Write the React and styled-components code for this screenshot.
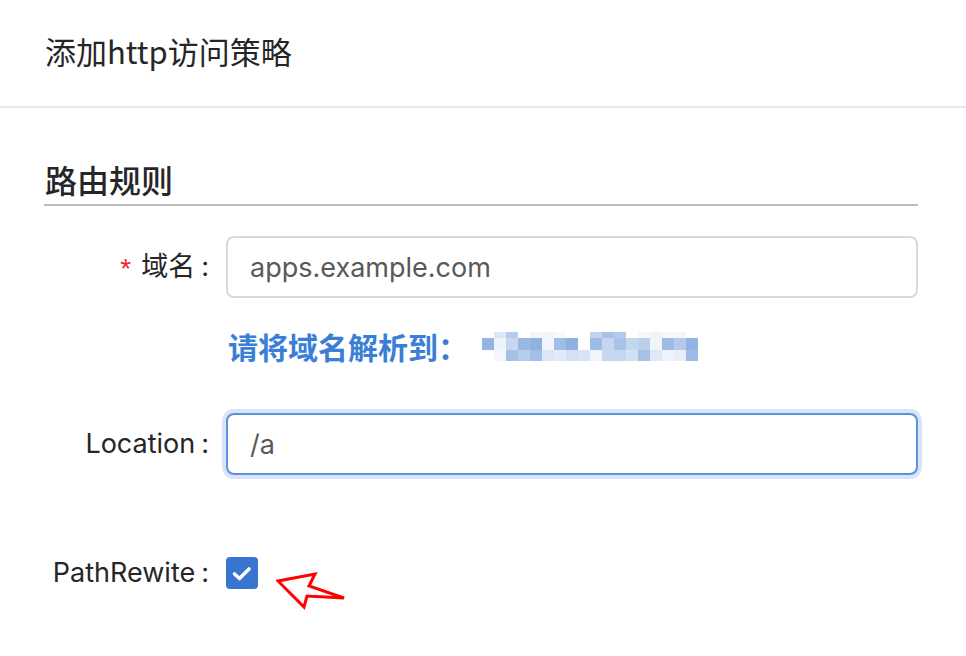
import React from "react";
import styled, { createGlobalStyle } from "styled-components";

const GlobalStyle = createGlobalStyle`
  html, body {
    margin: 0;
    padding: 0;
    background: #ffffff;
  }
  body {
    font-family: Inter, "Noto Sans CJK SC", sans-serif;
    color: #262626;
  }
`;

const Page = styled.div`
  width: 966px;
  height: 656px;
  overflow: hidden;
  background: #fff;
`;

const Header = styled.header`
  box-sizing: border-box;
  height: 108px;
  display: flex;
  align-items: center;
  padding: 0 45px 6px;
  border-bottom: 2px solid #e8e8e8;
  font-size: 31px;
  font-weight: 400;
  font-family: "Noto Sans CJK SC", sans-serif;
  color: #262626;
`;

const Body = styled.div`
  padding: 51px 48px 0 44px;
`;

const SectionTitle = styled.h2`
  margin: 0;
  font-size: 32px;
  font-weight: 500;
  line-height: 40px;
  padding: 0 0 5px 1px;
  border-bottom: 2px solid #bdbdbd;
  font-family: "Noto Sans CJK SC", sans-serif;
  color: #262626;
`;

const Row = styled.div`
  display: grid;
  grid-template-columns: 182px 1fr;
  align-items: center;
  margin-top: ${(p) => p.$top}px;
`;

const Label = styled.label`
  display: flex;
  justify-content: flex-end;
  align-items: center;
  font-size: 27px;
  line-height: 40px;
  color: #262626;
  white-space: nowrap;
  font-family: Inter, "Noto Sans CJK SC", sans-serif;

  &::after {
    content: ":";
    margin: 0 17px 0 6px;
  }
`;

const Required = styled.span`
  color: #f5222d;
  margin-right: 10px;
  font-size: 28px;
  font-family: "Liberation Sans", sans-serif;
  position: relative;
  top: 2px;
`;

const Input = styled.input`
  box-sizing: border-box;
  width: 100%;
  height: 62px;
  padding: 0 22px;
  border: 2px solid ${(p) => (p.$focused ? "#5b93e0" : "#d9d9d9")};
  border-radius: 8px;
  box-shadow: ${(p) => (p.$focused ? "0 0 0 4px #d9e5f7" : "none")};
  font-size: 27px;
  font-family: Inter, "Noto Sans CJK SC", sans-serif;
  color: #595959;
  outline: none;
  background: #fff;
`;

const Hint = styled.div`
  display: flex;
  align-items: center;
  gap: 14px;
  padding-left: 2px;
  font-size: 30px;
  line-height: 40px;
  font-weight: 700;
  color: #3b7ed6;
  font-family: "Noto Sans CJK SC", sans-serif;
`;

const CheckCell = styled.div`
  display: flex;
  align-items: center;
  gap: 18px;
  height: 40px;
`;

const Checkbox = styled.span`
  width: 32px;
  height: 32px;
  border-radius: 4px;
  background: #3875d0;
  display: flex;
  align-items: center;
  justify-content: center;
  flex-shrink: 0;
`;

const ArrowMark = styled.svg`
  flex-shrink: 0;
  margin-top: 28px;
`;

const pixelRows = [
  { y: 0, h: 6, c: [null, "#dce6f6", "#b6cbed", null, "#f3f6fc", "#f0f4fb", "#f8f9fd", null, null, "#c4d4ef", "#a9c2e9", "#b4c9ec", null, "#f8f9fd", "#f0f4fb", "#f8f9fd", "#f4f6fc", null] },
  { y: 6, h: 12, c: ["#94b5e3", "#eef2fb", "#c8d7f0", "#9ab8e5", "#8fb2e3", "#f1f5fc", "#9fbde7", "#8fb0e3", null, "#9fbbe6", "#c5d5ef", "#a9c2e9", "#c5d6ef", "#bcd0ee", "#f0f4fb", "#9ebbe6", "#b4c9ec", "#92b3e3"] },
  { y: 18, h: 11, c: [null, "#f4f6fc", "#a6c1e8", "#b8cdee", "#a3bee7", "#dce6f6", "#e3eaf7", "#d3e0f5", "#d8e3f5", "#f0f4fb", "#c8d7f0", "#c6d6ef", "#d2e0f4", "#a6c1e8", "#e0e8f7", "#eef2fb", "#e8eef9", "#9dbbe6"] },
];

const Blurred = () => (
  <svg width="216" height="29" viewBox="0 0 216 29">
    {pixelRows.map((r) =>
      r.c.map((c, i) =>
        c ? <rect key={`${r.y}-${i}`} x={i * 12} y={r.y} width="12" height={r.h} fill={c} /> : null
      )
    )}
  </svg>
);

const Arrow = () => (
  <ArrowMark width="72" height="45" viewBox="0 0 72 45">
    <path
      d="M2 16 L39 9 L33 21 L68 33 L31 31 L28 42 Z"
      fill="none"
      stroke="#ff0000"
      strokeWidth="3"
      strokeLinejoin="miter"
    />
  </ArrowMark>
);

export default function App() {
  return (
    <Page>
      <GlobalStyle />
      <Header>添加http访问策略</Header>
      <Body>
        <SectionTitle>路由规则</SectionTitle>

        <Row $top={30}>
          <Label>
            <Required>*</Required>域名
          </Label>
          <Input defaultValue="apps.example.com" />
        </Row>

        <Row $top={28}>
          <span />
          <Hint>
            请将域名解析到：
            <Blurred />
          </Hint>
        </Row>

        <Row $top={47}>
          <Label>Location</Label>
          <Input $focused defaultValue="/a" />
        </Row>

        <Row $top={78}>
          <Label>PathRewite</Label>
          <CheckCell>
            <Checkbox>
              <svg width="22" height="22" viewBox="0 0 22 22">
                <path d="M3.5 12 L8.5 16.5 L18 7" fill="none" stroke="#fff" strokeWidth="3.6" strokeLinecap="round" strokeLinejoin="round" />
              </svg>
            </Checkbox>
            <Arrow />
          </CheckCell>
        </Row>
      </Body>
    </Page>
  );
}
